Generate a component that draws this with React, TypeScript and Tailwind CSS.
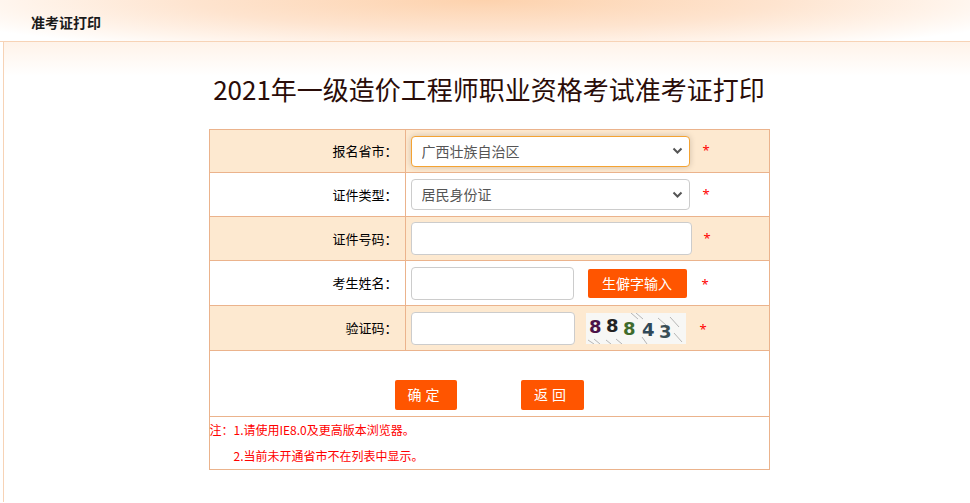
import React, { useState } from "react";

const cjk = "font-['SimSun','Noto_Sans_CJK_SC',sans-serif]";

const Star = () => <span className="text-[13px] text-[#ff0000]">*</span>;

const Captcha = () => (
  <svg width="100" height="31" viewBox="0 0 100 31" className="block">
    <rect width="100" height="31" fill="#f7f7f5" />
    <g stroke="#9a9a9a" strokeWidth="0.7">
      <line x1="2" y1="27" x2="8" y2="31" />
      <line x1="8" y1="26" x2="14" y2="31" />
      <line x1="20" y1="27" x2="25" y2="31" />
      <line x1="45" y1="0" x2="52" y2="6" />
      <line x1="50" y1="0" x2="57" y2="6" />
      <line x1="56" y1="24" x2="61" y2="31" />
      <line x1="72" y1="5" x2="80" y2="12" />
      <line x1="84" y1="4" x2="93" y2="14" />
      <line x1="88" y1="20" x2="96" y2="29" />
      <line x1="30" y1="26" x2="36" y2="31" />
    </g>
    <g fontFamily="'DejaVu Sans', sans-serif" fontWeight="bold" fontSize="18">
      <text x="3" y="20" fill="#4b1247">8</text>
      <text x="20" y="19" fill="#222222">8</text>
      <text x="37" y="22" fill="#3e6b2c">8</text>
      <text x="56" y="23" fill="#2f4858">4</text>
      <text x="73" y="25" fill="#3a4e55">3</text>
    </g>
  </svg>
);

const Label = ({ children }: { children: React.ReactNode }) => (
  <td className={`w-[196px] border border-[#ebb38c] pr-[7px] text-right text-[13px] text-black ${cjk}`}>
    {children}
  </td>
);

export default function App() {
  const [province, setProvince] = useState("广西壮族自治区");
  const [idType, setIdType] = useState("居民身份证");

  const selectCls =
    "h-[31px] w-[279px] appearance-none rounded-[4px] border bg-white pl-[10px] pr-8 text-[14px] text-[#555] font-['Microsoft_YaHei','Noto_Sans_CJK_SC',sans-serif] outline-none";
  const inputCls =
    "h-[33px] rounded-[4px] border border-[#cccccc] bg-white px-2 text-[14px] outline-none";

  const Arrow = () => (
    <svg
      className="pointer-events-none absolute right-[7px] top-1/2 -translate-y-1/2"
      width="11"
      height="8"
      viewBox="0 0 11 8"
    >
      <path d="M1.5 1.5 L5.5 5.5 L9.5 1.5" fill="none" stroke="#555" strokeWidth="2" />
    </svg>
  );

  return (
    <div className="min-h-[503px] bg-white">
      <div className="h-[42px] border-b border-[#f7d3b6] bg-[radial-gradient(ellipse_60%_140%_at_50%_0%,#fdd2ad_0%,#fee4cf_50%,#fff4eb_80%,#ffffff_100%)] pl-[31px] pt-[10px]">
        <span className={`text-[14px] font-bold text-[#1a1a1a] ${cjk}`}>准考证打印</span>
      </div>
      <div className="ml-[3px] min-h-[460px] border-l border-[#f7d3b6] bg-[linear-gradient(to_bottom,#fff3e9_0px,#ffffff_34px)] pl-[4px]">
        <h1 className="pt-[29px] text-center text-[26px] leading-[36px] text-[#2a0c08] font-['Microsoft_YaHei','Noto_Sans_CJK_SC',sans-serif]">
          2021年一级造价工程师职业资格考试准考证打印
        </h1>
        <table className="mx-auto mt-[22px] w-[561px] border-collapse">
          <tbody>
            <tr className="h-[43px] bg-[#fde9d0]">
              <Label>报名省市：</Label>
              <td className="border border-[#ebb38c] pl-[5px]">
                <div className="flex items-center gap-[13px]">
                  <div className="relative">
                    <select
                      value={province}
                      onChange={(e) => setProvince(e.target.value)}
                      className={`${selectCls} border-[#f4a333] shadow-[0_0_6px_rgba(0,0,0,0.18)]`}
                    >
                      <option>广西壮族自治区</option>
                      <option>北京市</option>
                    </select>
                    <Arrow />
                  </div>
                  <Star />
                </div>
              </td>
            </tr>
            <tr className="h-[44px] bg-white">
              <Label>证件类型：</Label>
              <td className="border border-[#ebb38c] pl-[5px]">
                <div className="flex items-center gap-[13px]">
                  <div className="relative">
                    <select
                      value={idType}
                      onChange={(e) => setIdType(e.target.value)}
                      className={`${selectCls} border-[#cccccc]`}
                    >
                      <option>居民身份证</option>
                      <option>护照</option>
                    </select>
                    <Arrow />
                  </div>
                  <Star />
                </div>
              </td>
            </tr>
            <tr className="h-[44px] bg-[#fde9d0]">
              <Label>证件号码：</Label>
              <td className="border border-[#ebb38c] pl-[5px]">
                <div className="flex items-center gap-[12px]">
                  <input className={`${inputCls} w-[281px]`} />
                  <Star />
                </div>
              </td>
            </tr>
            <tr className="h-[45px] bg-white">
              <Label>考生姓名：</Label>
              <td className="border border-[#ebb38c] pl-[5px]">
                <div className="flex items-center">
                  <input className={`${inputCls} w-[163px]`} />
                  <button
                    type="button"
                    className="ml-[14px] h-[29px] w-[99px] rounded-[2px] bg-[#ff5500] text-[14px] text-white font-['Microsoft_YaHei','Noto_Sans_CJK_SC',sans-serif]"
                  >
                    生僻字输入
                  </button>
                  <span className="ml-[15px]">
                    <Star />
                  </span>
                </div>
              </td>
            </tr>
            <tr className="h-[45px] bg-[#fde9d0]">
              <Label>验证码：</Label>
              <td className="border border-[#ebb38c] pl-[5px]">
                <div className="flex items-center">
                  <input className={`${inputCls} w-[164px]`} />
                  <span className="ml-[11px]">
                    <Captcha />
                  </span>
                  <span className="ml-[14px]">
                    <Star />
                  </span>
                </div>
              </td>
            </tr>
            <tr className="h-[66px] bg-white">
              <td colSpan={2} className="border border-[#ebb38c] pb-[6px] pt-[28px]">
                <div className={`flex justify-center gap-[64px] ${cjk}`}>
                  <button
                    type="button"
                    className="h-[30px] w-[62px] rounded-[2px] bg-[#ff5500] text-[14px] tracking-[4px] text-white"
                  >
                    确定
                  </button>
                  <button
                    type="button"
                    className="h-[30px] w-[63px] rounded-[2px] bg-[#ff5500] text-[14px] tracking-[4px] text-white"
                  >
                    返回
                  </button>
                </div>
              </td>
            </tr>
            <tr className="h-[53px] bg-white">
              <td colSpan={2} className={`border border-[#ebb38c] pt-0 text-[12px] leading-[26px] text-[#ff0000] ${cjk}`}>
                <div>注：1.请使用IE8.0及更高版本浏览器。</div>
                <div className="pl-[24px]">2.当前未开通省市不在列表中显示。</div>
              </td>
            </tr>
          </tbody>
        </table>
      </div>
    </div>
  );
}
